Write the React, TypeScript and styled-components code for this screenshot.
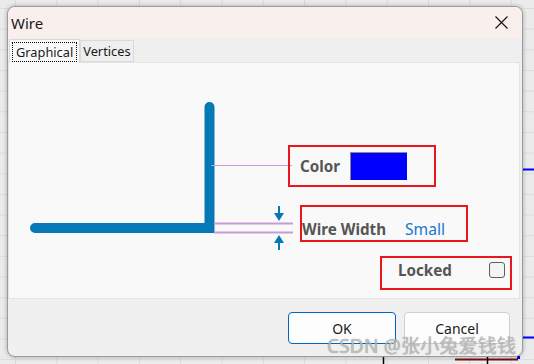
import React from 'react'
import styled, { createGlobalStyle } from 'styled-components'

const GlobalStyle = createGlobalStyle`
  html, body {
    margin: 0;
    padding: 0;
    background: #e8e8e8;
  }
  body {
    font-family: "Noto Sans", "Open Sans", sans-serif;
  }
`

const Desktop = styled.div`
  position: relative;
  width: 534px;
  height: 364px;
  overflow: hidden;
  box-sizing: border-box;
  padding: 6px 11px 0 7px;
  background-color: #ebebeb;
  background-image: linear-gradient(to right, #d9d9d9 1px, transparent 1px),
    linear-gradient(to bottom, #dcdcdc 1px, transparent 1px);
  background-size: 41.3px 20.67px;
  background-position: 15px 8px;
`

const Schematic = styled.svg`
  position: absolute;
  left: 0;
  top: 0;
`

const Dialog = styled.div`
  position: relative;
  width: 516px;
  height: 351px;
  box-sizing: border-box;
  border: 1px solid #9c9c9c;
  border-radius: 8px;
  background: #f0f0f0;
  box-shadow: 0 0 4px rgba(0, 0, 0, 0.3);
  overflow: hidden;
  display: flex;
  flex-direction: column;
`

const TitleBar = styled.div`
  height: 31px;
  flex: none;
  display: flex;
  align-items: center;
  padding: 0 14px 0 3px;
  background: #f9f0ee;
`

const Title = styled.span`
  font-size: 15px;
  color: #1a1a1a;
  flex: 1;
`

const CloseButton = styled.button`
  width: 14px;
  height: 14px;
  padding: 0;
  border: none;
  background: none;
  display: flex;
  align-items: center;
  justify-content: center;
`

const TabStrip = styled.div`
  height: 24px;
  flex: none;
  display: flex;
  align-items: flex-end;
  padding-left: 1px;
  background: #efefef;
`

const Tab = styled.div<{ $active?: boolean }>`
  position: relative;
  z-index: 1;
  box-sizing: border-box;
  height: ${(p) => (p.$active ? '24px' : '22px')};
  margin-bottom: ${(p) => (p.$active ? '-1px' : '0')};
  padding: ${(p) => (p.$active ? '2px 2px 1px' : '0 2px')};
  display: flex;
  align-items: center;
  border: 1px solid #dadada;
  border-bottom: ${(p) => (p.$active ? 'none' : '1px solid #dadada')};
  background: ${(p) => (p.$active ? '#f9f9f9' : '#efefef')};
  font-size: 12.8px;
  color: #1a1a1a;
`

const FocusLabel = styled.span`
  padding: 0 4px;
  height: 20px;
  line-height: 20px;
  outline: 1px dotted #000;
  outline-offset: -1px;
`

const Panel = styled.div`
  position: relative;
  height: 237px;
  flex: none;
  margin-right: 2px;
  box-sizing: border-box;
  border: 1px solid #e4e4e4;
  background: #f9f9f9;
`

const Drawing = styled.svg`
  position: absolute;
  left: 0;
  top: 0;
`

const Marked = styled.div<{ $x: number; $y: number; $w: number; $h: number }>`
  position: absolute;
  left: ${(p) => p.$x}px;
  top: ${(p) => p.$y}px;
  width: ${(p) => p.$w}px;
  height: ${(p) => p.$h}px;
  box-sizing: border-box;
  border: 2px solid #e9161e;
  display: flex;
  align-items: center;
`

const Label = styled.span`
  font-size: 15.2px;
  font-weight: 700;
  color: #555555;
  white-space: nowrap;
`

const Swatch = styled.div`
  width: 57px;
  height: 28px;
  box-sizing: border-box;
  background: #0000ff;
  border-top: 1px solid #8a8a8a;
  border-left: 1px solid #8a8a8a;
`

const LinkValue = styled.span`
  font-size: 15.6px;
  color: #1478d0;
`

const CheckBox = styled.div`
  width: 16px;
  height: 16px;
  box-sizing: border-box;
  border: 1px solid #5e5e5e;
  border-radius: 3px;
  background: #f4f4f4;
`

const Footer = styled.div`
  flex: 1;
  display: flex;
  justify-content: flex-end;
  align-items: flex-start;
  gap: 8px;
  padding: 13px 12px 0 0;
`

const Button = styled.button<{ $primary?: boolean }>`
  height: 32px;
  width: ${(p) => (p.$primary ? '108px' : '106px')};
  box-sizing: border-box;
  border: 1px solid ${(p) => (p.$primary ? '#0067c0' : '#d0d0d0')};
  border-radius: 4px;
  background: #fdfdfd;
  font-family: "Noto Sans", "Open Sans", sans-serif;
  font-size: 14px;
  color: #1a1a1a;
  padding: 0;
`

const Watermark = styled.div`
  position: absolute;
  left: 327px;
  top: 331px;
  font-family: "Noto Sans", "Noto Sans CJK SC", sans-serif;
  font-size: 19px;
  letter-spacing: 0.2px;
  color: rgba(200, 200, 200, 0.85);
  text-shadow: 0 0 1px rgba(80, 80, 80, 0.7);
  white-space: nowrap;
`

const WIRE = '#0479b5'
const GUIDE = '#c79bd8'

export default function App() {
  return (
    <>
      <GlobalStyle />
      <Desktop>
        <Schematic width={534} height={364}>
          <line x1={523} y1={169.5} x2={534} y2={169.5} stroke="#0000ff" strokeWidth={2} />
          <line x1={523} y1={337.5} x2={534} y2={337.5} stroke="#0000ff" strokeWidth={2} />
          <line x1={455} y1={359.5} x2={518} y2={359.5} stroke="#7a1010" strokeWidth={2} />
          <line x1={383.5} y1={357} x2={383.5} y2={364} stroke="#000" strokeWidth={1.5} />
          <line x1={487.5} y1={357} x2={487.5} y2={364} stroke="#000" strokeWidth={1.5} />
          <rect x={517} y={356} width={3} height={3} fill="#0000ff" />
        </Schematic>
        <Dialog>
          <TitleBar>
            <Title>Wire</Title>
            <CloseButton aria-label="Close">
              <svg width={13} height={13} viewBox="0 0 13 13">
                <path d="M0.5 0.5 L12.5 12.5 M12.5 0.5 L0.5 12.5" stroke="#111" strokeWidth={1.1} />
              </svg>
            </CloseButton>
          </TitleBar>
          <TabStrip>
            <Tab $active>
              <FocusLabel>Graphical</FocusLabel>
            </Tab>
            <Tab>Vertices</Tab>
          </TabStrip>
          <Panel>
            <Drawing width={511} height={235} viewBox="9 63 511 235">
              <path
                d="M35 228 H209.5 V107"
                fill="none"
                stroke={WIRE}
                strokeWidth={10}
                strokeLinecap="round"
                strokeLinejoin="miter"
              />
              <line x1={211} y1={165.5} x2={292} y2={165.5} stroke={GUIDE} strokeWidth={1} />
              <line x1={214} y1={223.5} x2={293} y2={223.5} stroke={GUIDE} strokeWidth={2} />
              <line x1={214} y1={232.5} x2={293} y2={232.5} stroke={GUIDE} strokeWidth={2} />
              <line x1={279} y1={206} x2={279} y2={214} stroke={WIRE} strokeWidth={2} />
              <path d="M274 213 H284 L279 221 Z" fill={WIRE} />
              <line x1={279} y1={242} x2={279} y2={250} stroke={WIRE} strokeWidth={2} />
              <path d="M274 243 H284 L279 235 Z" fill={WIRE} />
            </Drawing>
            <Marked $x={279} $y={82} $w={148} $h={42} style={{ paddingLeft: 10, gap: 10 }}>
              <Label>Color</Label>
              <Swatch />
            </Marked>
            <Marked $x={291} $y={142} $w={168} $h={37} style={{ paddingLeft: 0, paddingTop: 11, gap: 19 }}>
              <Label>Wire Width</Label>
              <LinkValue>Small</LinkValue>
            </Marked>
            <Marked $x={371} $y={193} $w={132} $h={34} style={{ paddingLeft: 16, paddingBottom: 6, gap: 37 }}>
              <Label>Locked</Label>
              <CheckBox />
            </Marked>
          </Panel>
          <Footer>
            <Button $primary>OK</Button>
            <Button>Cancel</Button>
          </Footer>
        </Dialog>
        <Watermark>CSDN @张小兔爱钱钱</Watermark>
      </Desktop>
    </>
  )
}
